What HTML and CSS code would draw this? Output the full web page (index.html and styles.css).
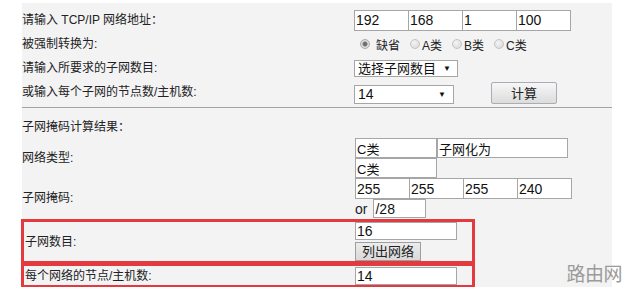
FILE: index.html
```html
<!DOCTYPE html>
<html lang="zh-CN">
<head>
    <meta charset="UTF-8">
    <meta name="viewport" content="width=device-width, initial-scale=1.0">
    <title>子网掩码计算器</title>
    <link rel="stylesheet" href="styles.css">
</head>
<body>
    <div class="panel">
        <div class="row r-addr">
            <div class="label">请输入 TCP/IP 网络地址：</div>
            <div class="value joined">
                <input class="box w55" value="192"><input class="box w55" value="168"><input class="box w55" value="1"><input class="box w55" value="100">
            </div>
        </div>
        <div class="row r-radio">
            <div class="label">被强制转换为:</div>
            <div class="value radios">
                <label><input type="radio" name="cls" checked>缺省</label>
                <label><input type="radio" name="cls">A类</label>
                <label><input type="radio" name="cls">B类</label>
                <label><input type="radio" name="cls">C类</label>
            </div>
        </div>
        <div class="row r-sel">
            <div class="label">请输入所要求的子网数目:</div>
            <div class="value">
                <span class="select sel-count"><select><option>选择子网数目</option></select></span>
            </div>
        </div>
        <div class="row r-hosts">
            <div class="label">或输入每个子网的节点数/主机数:</div>
            <div class="value">
                <span class="select sel-hosts"><select><option>14</option></select></span>
                <button class="btn calc">计算</button>
            </div>
        </div>
        <div class="sep"></div>
        <div class="row r-title">
            <div class="label">子网掩码计算结果：</div>
        </div>
        <div class="row r-type">
            <div class="label">网络类型:</div>
            <div class="value stack">
                <div><input class="box w82" value="C类"><input class="box w131" value="子网化为"></div>
                <div><input class="box w82" value="C类"></div>
            </div>
        </div>
        <div class="row r-mask">
            <div class="label">子网掩码:</div>
            <div class="value stack">
                <div class="joined"><input class="box w55" value="255"><input class="box w55" value="255"><input class="box w55" value="255"><input class="box w55" value="240"></div>
                <div class="or">or <input class="box w53 short" value="/28"></div>
            </div>
        </div>
        <div class="row mark mark-count">
            <div class="label">子网数目:</div>
            <div class="value stack">
                <div><input class="box w102 mid" value="16"></div>
                <div><button class="btn list">列出网络</button></div>
            </div>
        </div>
        <div class="row mark mark-hosts">
            <div class="label">每个网络的节点/主机数:</div>
            <div class="value">
                <input class="box w102 mid" value="14">
            </div>
        </div>
    </div>
    <div class="watermark">路由网</div>
</body>
</html>
```

FILE: styles.css
```css
* {
    box-sizing: border-box;
}
body {
    margin: 0;
    background: #fff;
    font-family: "Liberation Sans", "Noto Sans CJK SC", sans-serif;
    font-size: 12px;
    color: #222;
    height: 287px;
    overflow: hidden;
}
.panel {
    margin: 3px 0 0 22px;
    width: 590px;
    height: 284px;
    background: #f3f3f4;
    padding-top: 5px;
}
.row {
    display: flex;
    align-items: center;
}
.label {
    width: 332px;
    flex: none;
    line-height: 14px;
}
.value {
    display: flex;
    align-items: center;
}
.stack {
    flex-direction: column;
    align-items: flex-start;
}
.stack > div {
    display: flex;
    align-items: center;
}
.r-addr, .r-radio, .r-sel, .r-hosts {
    height: 24px;
}
.box {
    height: 21px;
    margin: 0;
    padding: 0 1px;
    border: 1px solid #a6a6a6;
    background: #fff;
    font-family: "Liberation Sans", "Noto Sans CJK SC", sans-serif;
    font-size: 14px;
    color: #111;
    outline: none;
}
.joined .box + .box {
    margin-left: -1px;
}
.w53 { width: 53px; }
.w55 { width: 55px; }
.w82 { width: 82px; }
.w102 { width: 102px; }
.w131 { width: 131px; }
.short { height: 19px; }
.mid { height: 18px; }

.radios label {
    display: flex;
    align-items: center;
    font-size: 12px;
    margin-right: 10px;
}
.radios label:first-child {
    margin-left: 6px;
}
.radios input {
    appearance: none;
    width: 10px;
    height: 10px;
    margin: 0 2px 0 0;
    border-radius: 50%;
    border: 1px solid #c4c4c4;
    background: radial-gradient(circle at 40% 35%, #f4f4f4, #d6d6d6);
}
.radios input:checked {
    background: radial-gradient(circle, #666 0, #777 2px, #e0e0e0 3px, #d6d6d6 5px);
    border-color: #aaa;
}
.radios label:first-child input {
    margin-right: 6px;
}

.select {
    position: relative;
    display: inline-block;
}
.select select {
    appearance: none;
    margin: 0;
    border: 1px solid #a6a6a6;
    border-radius: 0;
    background: #fff;
    font-family: "Liberation Sans", "Noto Sans CJK SC", sans-serif;
    font-size: 13px;
    color: #111;
    padding: 0 0 0 3px;
    outline: none;
}
.select::after {
    content: "▼";
    position: absolute;
    top: 50%;
    transform: translateY(-50%);
    font-size: 8px;
    color: #111;
    pointer-events: none;
}
.sel-count select {
    width: 104px;
    height: 17px;
    line-height: 15px;
}
.sel-count::after {
    right: 7px;
}
.sel-hosts select {
    width: 100px;
    height: 19px;
    font-size: 14px;
}
.sel-hosts::after {
    right: 8px;
}
.r-hosts .sel-hosts {
    margin-top: 4px;
}

.btn {
    margin: 0;
    font-family: "Liberation Sans", "Noto Sans CJK SC", sans-serif;
    font-size: 13px;
    color: #222;
    padding: 0;
    cursor: pointer;
}
.calc {
    width: 66px;
    height: 22px;
    margin-left: 37px;
    border: 1px solid #a9adb5;
    border-radius: 2px;
    background: linear-gradient(#f7f7f7, #dcdcdc);
    margin-top: 1px;
}
.list {
    width: 66px;
    height: 19px;
    margin-top: 2px;
    border: 1px solid #9e9e9e;
    background: linear-gradient(#ececec, #d9d9d9);
    line-height: 17px;
}

.sep {
    height: 1px;
    margin: 3px 0 4px;
    background: #a3a3a3;
}
.r-title {
    height: 26px;
    padding-top: 4px;
}
.r-type {
    height: 40px;
}
.r-type .box {
    height: 20px;
    font-size: 13px;
}
.r-mask {
    height: 40px;
}
.r-mask .value {
    margin-left: 1px;
}
.or {
    font-size: 14px;
    gap: 6px;
}
.r-type .value, .mark .value {
    margin-left: 1px;
}

.mark {
    width: 454px;
    margin-left: -1px;
    border: 3px solid #e23a3f;
}
.mark .label {
    width: 330px;
    padding-left: 1px;
}
.mark-count {
    height: 45px;
    margin-top: 1px;
}
.mark-hosts {
    height: 25px;
    margin-top: -1px;
}

.watermark {
    position: absolute;
    right: 7px;
    bottom: 2px;
    font-family: "Noto Sans CJK SC", sans-serif;
    font-size: 19px;
    line-height: 24px;
    color: #9b9b9b;
    letter-spacing: -0.5px;
}
```
